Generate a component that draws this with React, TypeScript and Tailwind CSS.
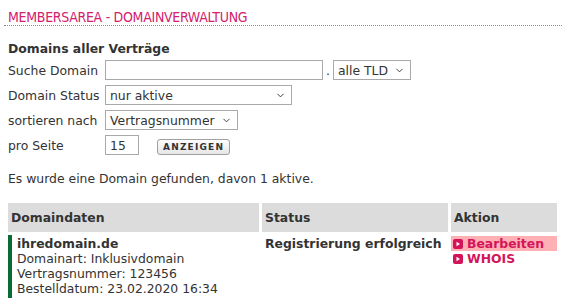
import { ChevronDown } from "lucide-react";

function Select({ value, width }: { value: string; width: string }) {
  return (
    <div
      className={`flex h-[20px] items-center justify-between border border-[#a9a9a9] bg-white pl-[4px] pr-[5px] ${width}`}
    >
      <span className="whitespace-nowrap">{value}</span>
      <ChevronDown size={11} strokeWidth={2} className="shrink-0 text-[#333]" />
    </div>
  );
}

function ActionIcon() {
  return (
    <span className="inline-flex h-[10px] w-[10px] shrink-0 items-center justify-center rounded-[2px] bg-[#d4145a]">
      <svg width="6" height="6" viewBox="0 0 6 6">
        <path d="M1.5 0.8 L5 3 L1.5 5.2 Z" fill="white" />
      </svg>
    </span>
  );
}

export default function App() {
  return (
    <div
      className="h-[306px] w-[562px] bg-white text-[12.4px] leading-[15px] text-[#333]"
      style={{ fontFamily: '"DejaVu Sans", Verdana, sans-serif' }}
    >
      <div className="pl-[4px] pt-[9px]">
        <h1
          className="pl-[4px] text-[14px] leading-[16px] tracking-[-0.3px] text-[#d4206c]"
          style={{ fontFamily: '"DejaVu Sans Condensed", "DejaVu Sans", sans-serif' }}
        >
          MEMBERSAREA - DOMAINVERWALTUNG
        </h1>
        <div className="border-b border-dotted border-[#8a8a8a]" />
      </div>

      <div className="px-[8px] pt-[15px]">
        <div className="font-bold">Domains aller Verträge</div>

        <div className="mt-[4px] flex items-center">
          <span className="w-[97px]">Suche Domain</span>
          <div className="h-[20px] w-[218px] border border-[#a9a9a9] bg-white" />
          <span className="mx-[3px]">.</span>
          <Select value="alle TLD" width="w-[78px]" />
        </div>

        <div className="mt-[5px] flex items-center">
          <span className="w-[97px]">Domain Status</span>
          <Select value="nur aktive" width="w-[187px]" />
        </div>

        <div className="mt-[5px] flex items-center">
          <span className="w-[97px]">sortieren nach</span>
          <Select value="Vertragsnummer" width="w-[133px]" />
        </div>

        <div className="mt-[5px] flex items-center">
          <span className="w-[97px]">pro Seite</span>
          <div className="flex h-[20px] w-[34px] items-center border border-[#a9a9a9] bg-white pl-[4px]">15</div>
          <button className="ml-[18px] mt-[3px] h-[16px] rounded-[3px] border border-[#a0a0a0] bg-gradient-to-b from-[#fdfdfd] to-[#e6e6e6] px-[5px] text-[9px] font-semibold leading-[12px] tracking-[1.2px] text-[#333]">
            ANZEIGEN
          </button>
        </div>

        <div className="mt-[16px]">Es wurde eine Domain gefunden, davon 1 aktive.</div>

        <div className="mt-[17px] grid grid-cols-[251px_186px_106px] gap-x-[3px] gap-y-[3px]">
          <div className="flex h-[29px] items-center bg-[#dcdcdc] pl-[3px] font-bold">Domaindaten</div>
          <div className="flex h-[29px] items-center bg-[#dcdcdc] pl-[3px] font-bold">Status</div>
          <div className="flex h-[29px] items-center bg-[#dcdcdc] pl-[3px] font-bold">Aktion</div>

          <div className="border-l-[4px] border-[#0a6b34] pb-[2px] pl-[5px] pt-[1px]">
            <div className="font-bold">ihredomain.de</div>
            <div>Domainart: Inklusivdomain</div>
            <div>Vertragsnummer: 123456</div>
            <div>Bestelldatum: 23.02.2020 16:34</div>
          </div>
          <div className="whitespace-nowrap pl-[3px] pt-[1px] font-bold">Registrierung erfolgreich</div>
          <div className="pt-[1px] font-bold text-[#d4145a]">
            <div className="flex h-[15px] items-center gap-[4px] bg-[#ffb0b4] pl-[2px]">
              <ActionIcon />
              <span>Bearbeiten</span>
            </div>
            <div className="flex h-[15px] items-center gap-[4px] pl-[2px]">
              <ActionIcon />
              <span>WHOIS</span>
            </div>
          </div>
        </div>
      </div>
    </div>
  );
}
